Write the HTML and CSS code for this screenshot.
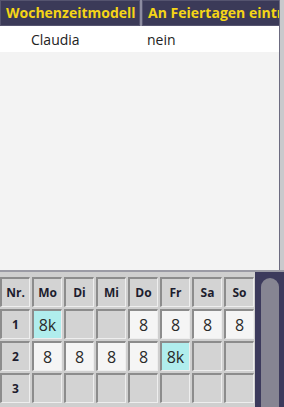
FILE: index.html
```html
<!DOCTYPE html>
<html>
<head>
<meta charset="utf-8">
<link rel="stylesheet" href="styles.css">
</head>
<body>
<div class="top">
  <div class="top-main">
    <div class="thead">
      <div class="th">Wochenzeitmodell</div>
      <div class="th">An Feiertagen eintr</div>
    </div>
    <div class="trow">
      <div class="td name">Claudia</div>
      <div class="td">nein</div>
    </div>
  </div>
  <div class="top-scroll"></div>
</div>
<div class="bottom">
  <div class="grid">
    <div class="c h">Nr.</div><div class="c h">Mo</div><div class="c h">Di</div><div class="c h">Mi</div><div class="c h">Do</div><div class="c h">Fr</div><div class="c h">Sa</div><div class="c h">So</div>
    <div class="c h">1</div><div class="c v k">8k</div><div class="c"></div><div class="c"></div><div class="c v">8</div><div class="c v">8</div><div class="c v">8</div><div class="c v">8</div>
    <div class="c h">2</div><div class="c v">8</div><div class="c v">8</div><div class="c v">8</div><div class="c v">8</div><div class="c v k">8k</div><div class="c"></div><div class="c"></div>
    <div class="c h">3</div><div class="c"></div><div class="c"></div><div class="c"></div><div class="c"></div><div class="c"></div><div class="c"></div><div class="c"></div>
  </div>
  <div class="vscroll"><div class="thumb"></div></div>
</div>
</body>
</html>
```
FILE: styles.css
```css
html, body {
  margin: 0;
  padding: 0;
  overflow: hidden;
}
body {
  width: 284px;
  height: 407px;
  font-family: "Open Sans", "DejaVu Sans", sans-serif;
  background: #3c3a5c;
}
.top {
  display: flex;
  height: 272px;
  border-bottom: 2px solid #9a9aa4;
  box-sizing: border-box;
}
.top-main {
  flex: 1;
  background: #f3f3f3;
  overflow: hidden;
}
.top-scroll {
  width: 4px;
  background: #c9c9cc;
  border-left: 1px solid #6c6b80;
}
.thead {
  display: grid;
  grid-template-columns: 140px 138px;
  column-gap: 2px;
  background: #8d8ca0;
  height: 26px;
}
.th {
  background: #3b3a58;
  border: 1px solid #55546f;
  color: #f5d516;
  font-weight: 700;
  font-size: 14px;
  line-height: 23px;
  padding-left: 5px;
  white-space: nowrap;
  overflow: hidden;
}
.trow {
  display: grid;
  grid-template-columns: 142px 136px;
  background: #fff;
  height: 26px;
}
.td {
  font-size: 14px;
  line-height: 27px;
  color: #222;
  padding-left: 5px;
}
.td.name {
  padding-left: 31px;
}
.bottom {
  display: flex;
  height: 135px;
  overflow: hidden;
}
.grid {
  width: 255px;
  background: #cfcfcf;
  display: grid;
  grid-template-columns: repeat(8, 30px);
  grid-auto-rows: 30px;
  gap: 2px;
  padding: 5px 0 0 0;
  align-content: start;
}
.c {
  background: #d3d3d3;
  border-top: 2px solid #8c8c8c;
  border-left: 2px solid #8c8c8c;
  border-right: 1px solid #eeeeee;
  border-bottom: 1px solid #eeeeee;
  box-sizing: border-box;
  display: flex;
  align-items: center;
  justify-content: center;
  color: #1d1d2e;
}
.c.h {
  font-weight: 700;
  font-size: 12px;
}
.c.v {
  background: #f5f5f5;
  font-size: 16px;
  color: #2a2a2a;
}
.c.v.k {
  background: #b0eded;
}
.vscroll {
  flex: 1;
  display: flex;
  padding: 6px 5px 0 6px;
}
.thumb {
  flex: 1;
  background: #868592;
  border-radius: 9px 9px 0 0;
}
```
